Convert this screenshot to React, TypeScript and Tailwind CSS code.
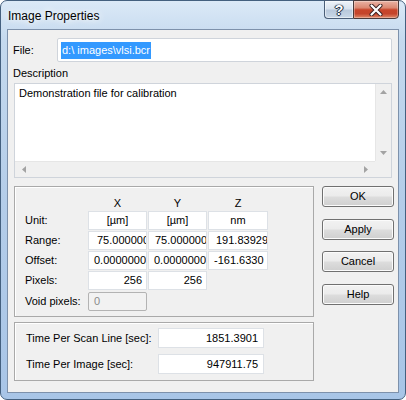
import { clsx } from 'clsx';

const FONT = "font-['Liberation_Sans',Arial,sans-serif]";

const Cell = ({ children, className }: { children?: React.ReactNode; className?: string }) => (
  <div
    className={clsx(
      'h-[18.5px] bg-white border border-[#dde1e6] overflow-hidden whitespace-nowrap leading-[16px] text-[11px] text-black',
      className,
    )}
  >
    {children}
  </div>
);

const DlgButton = ({ label, className }: { label: string; className?: string }) => (
  <button
    className={clsx(
      'h-[21px] w-[72px] rounded-[3px] border border-[#707070] text-[11px] text-black leading-none',
      'bg-[linear-gradient(to_bottom,#f2f2f2_0%,#ebebeb_48%,#dddddd_52%,#cfcfcf_100%)] shadow-[inset_0_0_0_1px_#fbfbfb]',
      className,
    )}
  >
    {label}
  </button>
);

const Row = ({ label, children }: { label: string; children: React.ReactNode }) => (
  <div className="flex items-center">
    <div className="w-[63px] text-[11px] text-black">{label}</div>
    {children}
  </div>
);

export default function App() {
  return (
    <div className={clsx('w-[406px] h-[400px] bg-white', FONT)}>
      <div className="w-[406px] h-[400px] rounded-[7px] border border-[#44607f] bg-[linear-gradient(to_bottom,#dbe9f7_0%,#c4d9ee_10%,#b4cde9_50%,#a8c5e7_100%)] flex flex-col px-[6px] pb-[6px]">
        {/* title bar */}
        <div className="h-[28px] flex items-start">
          <div className="self-center ml-[1px] mt-[1px] text-[12px] text-black [text-shadow:0_0_6px_#ffffff,0_0_10px_#ffffff]">
            Image Properties
          </div>
          <div className="ml-auto -mt-[1px] flex h-[19px]">
            <div className="w-[29px] h-[19px] rounded-bl-[4px] border border-r-0 border-[#4a5e78] bg-[linear-gradient(to_bottom,#eef3f9_0%,#d9e3ef_45%,#b9c9dc_55%,#c9d8e8_100%)] flex items-center justify-center shadow-[inset_0_0_0_1px_rgba(255,255,255,0.5)]">
              <span className="text-[14px] font-bold leading-none text-white [text-shadow:0_0_1px_#29364a,0_0_2px_#29364a,1px_0_0_#29364a,-1px_0_0_#29364a,0_1px_0_#29364a]">
                ?
              </span>
            </div>
            <div className="w-[46px] h-[19px] rounded-br-[4px] border border-[#4a3a3a] bg-[linear-gradient(to_bottom,#eab3a4_0%,#db8872_40%,#c8452a_52%,#c4442b_75%,#e08a6a_100%)] flex items-center justify-center shadow-[inset_0_0_0_1px_rgba(255,255,255,0.3)]">
              <svg width="14" height="12" viewBox="0 0 14 12">
                <path d="M2.5 1.5 L11.5 10.5 M11.5 1.5 L2.5 10.5" stroke="#3a2020" strokeWidth="4" strokeLinecap="round" />
                <path d="M2.5 1.5 L11.5 10.5 M11.5 1.5 L2.5 10.5" stroke="#ffffff" strokeWidth="2.2" strokeLinecap="round" />
              </svg>
            </div>
          </div>
        </div>

        {/* client area */}
        <div className="flex-1 border border-[#7d91ab] bg-[#f0f0f0] px-[6px] pt-[8px]">
          <div className="flex items-center h-[24px]">
            <div className="w-[43px] -ml-[1px] text-[11px] text-black">File:</div>
            <div className="flex-1 ml-[1px] h-[24px] bg-white border border-[#cfd4db] rounded-[2px] flex items-center pl-[3px]">
              <span className="bg-[#3399ff] text-white text-[11px] leading-[17px] px-[1px]">d:\ images\vlsi.bcr</span>
            </div>
          </div>

          <div className="mt-[3px] -ml-[1px] h-[16px] leading-[16px] text-[11px] text-black">Description</div>

          <div className="mt-[2px] h-[95px] bg-white border border-[#cfd4db] flex flex-col">
            <div className="flex flex-1">
              <div className="flex-1 pl-[4px] pt-[1px] text-[11px] text-black">Demonstration file for calibration</div>
              <div className="w-[16px] bg-[#f0f0f0] border-l border-[#e6e6e6] flex flex-col items-center justify-between py-[6px]">
                <svg width="7" height="4" viewBox="0 0 7 4"><path d="M0 4 L3.5 0 L7 4 Z" fill="#a3a3a3" /></svg>
                <svg width="7" height="4" viewBox="0 0 7 4"><path d="M0 0 L3.5 4 L7 0 Z" fill="#a3a3a3" /></svg>
              </div>
            </div>
            <div className="flex h-[16px]">
              <div className="flex-1 bg-[#f0f0f0] border-t border-[#e6e6e6] flex items-center justify-between px-[7px]">
                <svg width="4" height="7" viewBox="0 0 4 7"><path d="M4 0 L0 3.5 L4 7 Z" fill="#a3a3a3" /></svg>
                <svg width="4" height="7" viewBox="0 0 4 7"><path d="M0 0 L4 3.5 L0 7 Z" fill="#a3a3a3" /></svg>
              </div>
              <div className="w-[16px] bg-[#f0f0f0]" />
            </div>
          </div>

          <div className="mt-[8px] flex items-start gap-[8px]">
            <div className="flex flex-col gap-[5px]">
              {/* dimensions group */}
              <div className="w-[300px] h-[131px] border border-[#a9a9a9] shadow-[inset_1px_1px_0_#ffffff] pl-[10px] pt-[8px]">
                <div className="flex h-[16px] items-center text-[11px] text-black">
                  <div className="w-[63px]" />
                  <div className="w-[59px] text-center">X</div>
                  <div className="w-[59px] text-center ml-[1px]">Y</div>
                  <div className="w-[60px] text-center ml-[1px]">Z</div>
                </div>
                <div className="flex flex-col gap-[1.5px]">
                  <Row label="Unit:">
                    <Cell className="w-[59px] text-center">[µm]</Cell>
                    <Cell className="w-[59px] text-center ml-[1px]">[µm]</Cell>
                    <Cell className="w-[60px] text-center ml-[1px]">nm</Cell>
                  </Row>
                  <Row label="Range:">
                    <Cell className="w-[59px] pl-[8px]">75.0000000</Cell>
                    <Cell className="w-[59px] pl-[6px] ml-[1px]">75.0000000</Cell>
                    <Cell className="w-[60px] pl-[7px] ml-[1px]">191.83929</Cell>
                  </Row>
                  <Row label="Offset:">
                    <Cell className="w-[59px] pl-[5px]">0.0000000</Cell>
                    <Cell className="w-[59px] pl-[5px] ml-[1px]">0.0000000</Cell>
                    <Cell className="w-[60px] pl-[5px] ml-[1px]">-161.6330</Cell>
                  </Row>
                  <Row label="Pixels:">
                    <Cell className="w-[59px] text-right pr-[4px]">256</Cell>
                    <Cell className="w-[59px] text-right pr-[4px] ml-[1px]">256</Cell>
                  </Row>
                </div>
                <div className="mt-[2.5px] flex items-center">
                  <div className="w-[63px] text-[11px] text-black">Void pixels:</div>
                  <div className="w-[59px] h-[19px] bg-[#f2f2f2] border border-[#b3b3b3] rounded-[2px] pl-[5px] leading-[17px] text-[11px] text-[#8a8a8a]">
                    0
                  </div>
                </div>
              </div>

              {/* timing group */}
              <div className="w-[300px] h-[59px] border border-[#a9a9a9] shadow-[inset_1px_1px_0_#ffffff] pl-[11px] pt-[5px] flex flex-col gap-[6px]">
                <div className="flex items-center">
                  <div className="w-[132px] text-[11px] text-black">Time Per Scan Line [sec]:</div>
                  <Cell className="w-[106px] h-[20px] leading-[18px] text-right pr-[5px]">1851.3901</Cell>
                </div>
                <div className="flex items-center">
                  <div className="w-[132px] text-[11px] text-black">Time Per Image [sec]:</div>
                  <Cell className="w-[106px] h-[20px] leading-[18px] text-right pr-[5px]">947911.75</Cell>
                </div>
              </div>
            </div>

            <div className="flex flex-col">
              <DlgButton label="OK" />
              <DlgButton label="Apply" className="mt-[12px]" />
              <DlgButton label="Cancel" className="mt-[11px]" />
              <DlgButton label="Help" className="mt-[12px]" />
            </div>
          </div>
        </div>
      </div>
    </div>
  );
}
